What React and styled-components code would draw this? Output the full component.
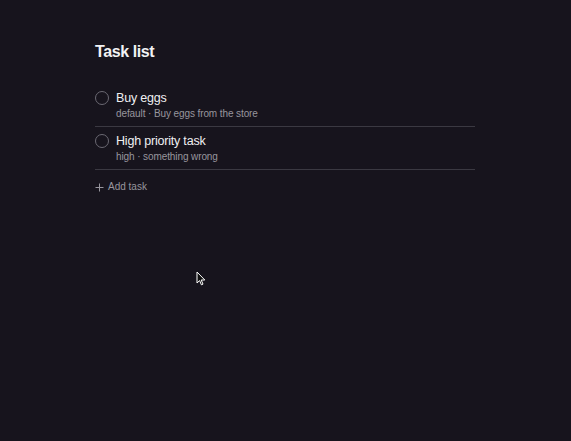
import React from 'react';
import styled, { createGlobalStyle } from 'styled-components';

const Global = createGlobalStyle`
  html, body {
    margin: 0;
    background: #17141d;
    height: 100%;
  }
  body {
    font-family: "Liberation Sans", Arial, sans-serif;
    color: #ececee;
    -webkit-font-smoothing: antialiased;
  }
`;

const Page = styled.div`
  position: relative;
  width: 571px;
  height: 441px;
  box-sizing: border-box;
  padding: 42px 96px 0 95px;
`;

const Title = styled.h1`
  margin: 0 0 22px;
  font-size: 16px;
  line-height: 20px;
  font-weight: 700;
  letter-spacing: -0.4px;
  color: #f2f2f4;
`;

const List = styled.ul`
  list-style: none;
  margin: 0;
  padding: 0;
`;

const Row = styled.li`
  display: flex;
  gap: 7px;
  padding: 5px 0 5px;
  border-bottom: 1px solid #3b3942;
`;

const Check = styled.span`
  flex: none;
  width: 12px;
  height: 12px;
  margin-top: 2px;
  border: 1px solid #6b6973;
  border-radius: 50%;
`;

const Body = styled.div`
  display: flex;
  flex-direction: column;
`;

const Name = styled.span`
  font-size: 12.5px;
  line-height: 18px;
  letter-spacing: -0.2px;
  color: #f0f0f2;
`;

const Meta = styled.span`
  font-size: 10px;
  line-height: 14px;
  letter-spacing: -0.1px;
  color: #98969e;
`;

const AddButton = styled.button`
  display: flex;
  align-items: center;
  gap: 4px;
  margin-top: 10px;
  padding: 0;
  border: 0;
  background: none;
  font-family: inherit;
  font-size: 10px;
  line-height: 14px;
  color: #98969e;
`;

const Cursor = styled.svg`
  position: absolute;
  left: 196px;
  top: 271px;
`;

const tasks = [
  { name: 'Buy eggs', priority: 'default', note: 'Buy eggs from the store' },
  { name: 'High priority task', priority: 'high', note: 'something wrong' },
];

export default function App() {
  return (
    <>
      <Global />
      <Page>
        <Title>Task list</Title>
        <List>
          {tasks.map((t) => (
            <Row key={t.name}>
              <Check />
              <Body>
                <Name>{t.name}</Name>
                <Meta>
                  {t.priority} · {t.note}
                </Meta>
              </Body>
            </Row>
          ))}
        </List>
        <AddButton>
          <svg width="9" height="9" viewBox="0 0 9 9">
            <path d="M4.5 0.5v8M0.5 4.5h8" stroke="#98969e" strokeWidth="1" />
          </svg>
          Add task
        </AddButton>
        <Cursor width="10" height="15" viewBox="0 0 10 15">
          <path
            d="M1 1v11l2.6-2.4 1.8 4.2 1.6-.7-1.8-4.1H8.8z"
            fill="#111"
            stroke="#fff"
            strokeWidth="1"
            strokeLinejoin="round"
          />
        </Cursor>
      </Page>
    </>
  );
}
